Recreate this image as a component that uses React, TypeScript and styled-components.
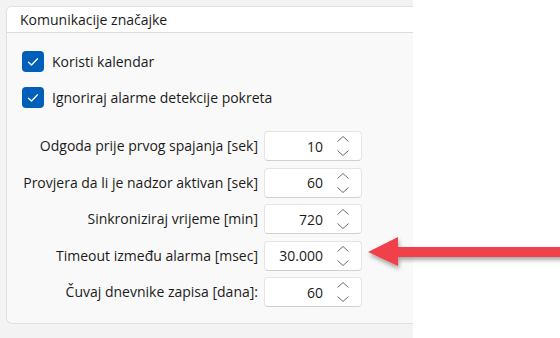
import React from "react";
import styled, { createGlobalStyle } from "styled-components";

const Global = createGlobalStyle`
  html, body { margin: 0; padding: 0; background: #ffffff; }
  body { font-family: "Open Sans", "Noto Sans", sans-serif; color: #1b1b1b; }
  * { box-sizing: border-box; }
`;

const Page = styled.div`
  position: relative;
  width: 560px;
  height: 338px;
  display: flex;
  overflow: hidden;
  background: #ffffff;
`;

const LeftPane = styled.div`
  width: 413px;
  height: 338px;
  background: #f3f3f3;
  padding: 6px 0 0 6px;
`;

const Card = styled.div`
  border: 1px solid #e0e0e0;
  border-right: none;
  border-radius: 6px 0 0 6px;
  background: #f9f9f9;
  height: 318px;
  display: flex;
  flex-direction: column;
  overflow: hidden;
`;

const CardHeader = styled.div`
  height: 26px;
  background: #ffffff;
  border-bottom: 1px solid #dcdcdc;
  padding-left: 13px;
  display: flex;
  align-items: center;
  font-size: 14px;
`;

const CardBody = styled.div`
  padding: 18px 0 0 15px;
  display: flex;
  flex-direction: column;
`;

const CheckRow = styled.label`
  display: flex;
  align-items: center;
  gap: 8px;
  height: 21px;
  margin-bottom: 15px;
  font-size: 14px;
`;

const Box = styled.span`
  width: 22px;
  height: 21px;
  border-radius: 4px;
  background: #005fb8;
  display: flex;
  align-items: center;
  justify-content: center;
`;

const Form = styled.div`
  margin-top: 8px;
  display: grid;
  grid-template-columns: 236px 98px;
  column-gap: 6px;
  row-gap: 6.5px;
`;

const Label = styled.div`
  text-align: right;
  font-size: 14px;
  height: 30px;
  line-height: 30px;
  white-space: nowrap;
`;

const Spin = styled.div`
  height: 30px;
  background: #ffffff;
  border: 1px solid #e5e5e5;
  border-bottom-color: #d0d0d0;
  border-radius: 4px;
  display: flex;
  align-items: center;
  font-size: 14px;
`;

const Value = styled.div`
  flex: 1;
  text-align: right;
  padding-right: 2px;
`;

const Arrows = styled.div`
  width: 36px;
  display: flex;
  flex-direction: column;
  align-items: center;
  gap: 8px;
`;

const Arrow = styled.svg`
  position: absolute;
  left: 364px;
  top: 234px;
  overflow: visible;
`;

const Check = () => (
  <svg width="12" height="10" viewBox="0 0 12 10">
    <path d="M1.5 5.2 L4.5 8 L10.5 1.8" fill="none" stroke="#fff" strokeWidth="1.3" strokeLinecap="round" strokeLinejoin="round" />
  </svg>
);

const Chevron = ({ up }: { up: boolean }) => (
  <svg width="12" height="6" viewBox="0 0 12 6">
    <path d={up ? "M0.5 5.5 L6 0.5 L11.5 5.5" : "M0.5 0.5 L6 5.5 L11.5 0.5"} fill="none" stroke="#6b6b6b" strokeWidth="1" />
  </svg>
);

const rows = [
  ["Odgoda prije prvog spajanja [sek]", "10"],
  ["Provjera da li je nadzor aktivan [sek]", "60"],
  ["Sinkroniziraj vrijeme [min]", "720"],
  ["Timeout između alarma [msec]", "30.000"],
  ["Čuvaj dnevnike zapisa [dana]:", "60"],
];

export default function App() {
  return (
    <Page>
      <Global />
      <LeftPane>
        <Card>
          <CardHeader>Komunikacije značajke</CardHeader>
          <CardBody>
            <CheckRow>
              <Box><Check /></Box>
              Koristi kalendar
            </CheckRow>
            <CheckRow>
              <Box><Check /></Box>
              Ignoriraj alarme detekcije pokreta
            </CheckRow>
            <Form>
              {rows.map(([l, v]) => (
                <React.Fragment key={l}>
                  <Label>{l}</Label>
                  <Spin>
                    <Value>{v}</Value>
                    <Arrows>
                      <Chevron up />
                      <Chevron up={false} />
                    </Arrows>
                  </Spin>
                </React.Fragment>
              ))}
            </Form>
          </CardBody>
        </Card>
      </LeftPane>
      <Arrow width="196" height="40" viewBox="0 0 196 40">
        <defs>
          <filter id="sh" x="-10%" y="-50%" width="120%" height="200%">
            <feDropShadow dx="1" dy="3" stdDeviation="2" floodColor="#000" floodOpacity="0.35" />
          </filter>
        </defs>
        <polygon points="4,18 34,3 34,13 200,13 200,23 34,23 34,32" fill="#f0414a" filter="url(#sh)" />
      </Arrow>
    </Page>
  );
}
